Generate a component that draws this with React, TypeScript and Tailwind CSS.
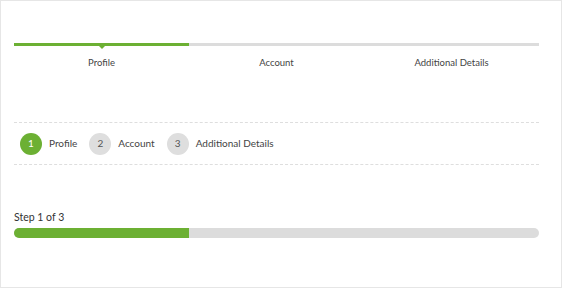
import React from "react";

const steps = ["Profile", "Account", "Additional Details"];
const current = 0;

const App: React.FC = () => {
  const pct = ((current + 1) / steps.length) * 100;

  return (
    <div
      className="w-[562px] h-[288px] bg-white border border-[#e6e6e6] pl-[13px] pr-[22px] text-[#444]"
      style={{ fontFamily: "Lato, 'Open Sans', sans-serif" }}
    >
      {/* Tab style progress */}
      <div className="pt-[42px]">
        <div className="flex">
          {steps.map((s, i) => (
            <div key={s} className="flex-1 flex flex-col items-center">
              <div
                className={`w-full h-[3px] ${
                  i <= current ? "bg-[#6cb033]" : "bg-[#dcdcdc]"
                }`}
              />
              <div className="h-[3px] flex justify-center">
                {i === current && (
                  <div className="w-0 h-0 border-l-[3px] border-r-[3px] border-t-[3px] border-l-transparent border-r-transparent border-t-[#6cb033]" />
                )}
              </div>
              <div className="mt-[8px] text-[9.5px] leading-[12px] text-[#444]">{s}</div>
            </div>
          ))}
        </div>
      </div>

      {/* Numbered steps */}
      <div className="mt-[53px] border-t border-b border-dashed border-[#dedede] h-[43px] flex items-center pl-[6px]">
        {steps.map((s, i) => (
          <div key={s} className="flex items-center mr-[12px]">
            <div
              className={`w-[22px] h-[22px] rounded-full flex items-center justify-center text-[10px] ${
                i === current
                  ? "bg-[#6cb033] text-white"
                  : "bg-[#dedede] text-[#555]"
              }`}
            >
              {i + 1}
            </div>
            <span className="ml-[7px] text-[10px] text-[#444]">{s}</span>
          </div>
        ))}
      </div>

      {/* Step counter bar */}
      <div className="mt-[45px]">
        <div className="text-[10.5px] leading-[14px] text-[#333]">
          Step {current + 1} of {steps.length}
        </div>
        <div className="mt-[4px] h-[10px] rounded-full bg-[#dcdcdc] overflow-hidden">
          <div className="h-full bg-[#6cb033]" style={{ width: `${pct}%` }} />
        </div>
      </div>
    </div>
  );
};

export default App;
